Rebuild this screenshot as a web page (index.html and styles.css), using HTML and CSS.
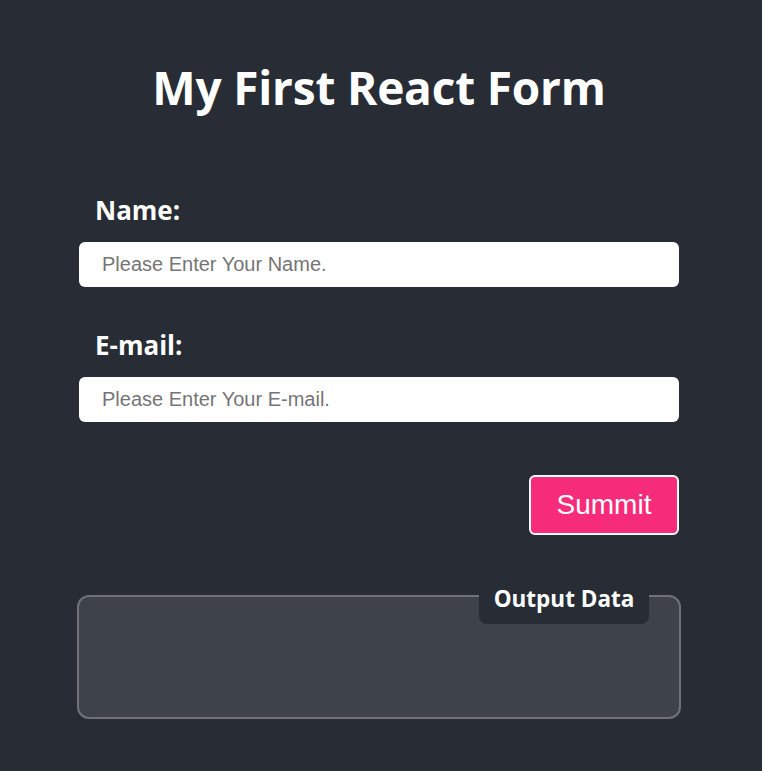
FILE: index.html
```html
<!DOCTYPE html>
<html lang="en">
<head>
<meta charset="utf-8">
<title>My First React Form</title>
<link rel="stylesheet" href="styles.css">
</head>
<body>
<div class="page">
  <h1 class="title">My First React Form</h1>
  <form class="form">
    <div class="field">
      <label class="label" for="name">Name:</label>
      <input class="input" id="name" type="text" placeholder="Please Enter Your Name.">
    </div>
    <div class="field">
      <label class="label" for="email">E-mail:</label>
      <input class="input" id="email" type="text" placeholder="Please Enter Your E-mail.">
    </div>
    <div class="actions">
      <button class="submit" type="button">Summit</button>
    </div>
  </form>
  <div class="output">
    <div class="output-tab">Output Data</div>
  </div>
</div>
</body>
</html>
```
FILE: styles.css
```css
html, body {
  margin: 0;
  padding: 0;
  background: #282c34;
}

.page {
  min-height: 771px;
  box-sizing: border-box;
  padding: 58px 4px 0 0;
  display: flex;
  flex-direction: column;
  align-items: center;
  font-family: "Open Sans", "Noto Sans", sans-serif;
  color: #ffffff;
}

.title {
  margin: 0;
  font-size: 46px;
  line-height: 58px;
  font-weight: 700;
  letter-spacing: -0.2px;
}

.form {
  width: 600px;
  margin-top: 77px;
  display: flex;
  flex-direction: column;
}

.field {
  display: flex;
  flex-direction: column;
}

.field + .field {
  margin-top: 41px;
}

.label {
  padding-left: 16px;
  font-size: 26px;
  line-height: 34px;
  font-weight: 700;
}

.input {
  margin-top: 15px;
  height: 45px;
  box-sizing: border-box;
  border: none;
  border-radius: 6px;
  padding: 0 23px;
  background: #ffffff;
  font-family: "Liberation Sans", Arial, sans-serif;
  font-size: 20px;
  color: #222;
  outline: none;
}

.input::placeholder {
  color: #757575;
}

.actions {
  display: flex;
  justify-content: flex-end;
  margin-top: 53px;
}

.submit {
  width: 150px;
  height: 60px;
  box-sizing: border-box;
  border: 2px solid #ffffff;
  border-radius: 6px;
  background: #f62b79;
  color: #ffffff;
  font-family: "Liberation Sans", Arial, sans-serif;
  font-size: 28px;
  padding: 0;
}

.output {
  position: relative;
  margin-top: 60px;
  width: 604px;
  height: 124px;
  box-sizing: border-box;
  border: 2px solid #6f7278;
  border-radius: 12px;
  background: #3e424a;
}

.output-tab {
  position: absolute;
  top: -12px;
  right: 30px;
  width: 170px;
  box-sizing: border-box;
  padding-bottom: 11px;
  text-align: center;
  background: #282c34;
  border-radius: 0 0 8px 8px;
  font-size: 22.5px;
  line-height: 28px;
  font-weight: 700;
}
```
